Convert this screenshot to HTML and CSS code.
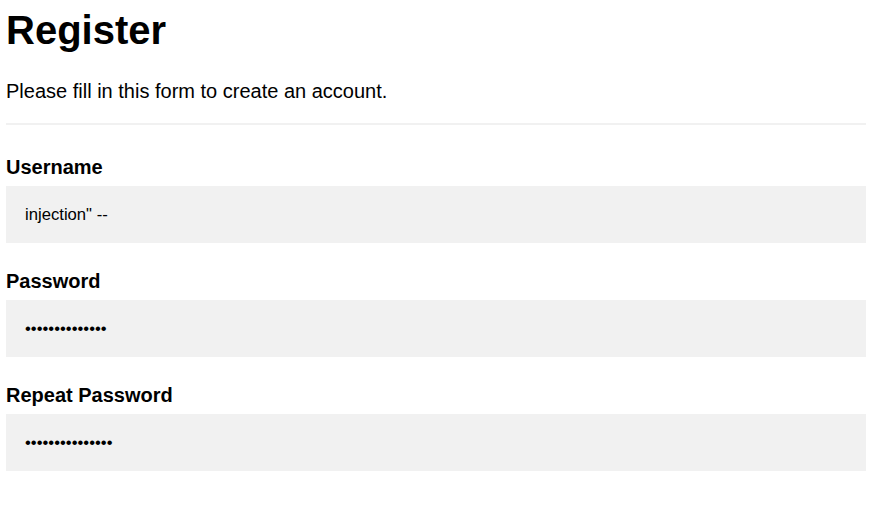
FILE: index.html
```html
<!DOCTYPE html>
<html lang="en">
<head>
<meta charset="utf-8">
<title>Register</title>
<link rel="stylesheet" href="styles.css">
</head>
<body>
<form class="container">
  <h1 class="title">Register</h1>
  <p class="intro">Please fill in this form to create an account.</p>
  <hr class="rule">
  <label class="field-label" for="username">Username</label>
  <input class="field" type="text" id="username" value="injection&quot; --">
  <label class="field-label" for="password">Password</label>
  <input class="field" type="password" id="password" value="abcdefghijklmn">
  <label class="field-label" for="repeat">Repeat Password</label>
  <input class="field" type="password" id="repeat" value="abcdefghijklmno">
</form>
</body>
</html>
```
FILE: styles.css
```css
html, body {
  margin: 0;
  background: #ffffff;
}

body {
  font-family: "Liberation Sans", Arial, sans-serif;
  color: #000;
}

.container {
  width: 860px;
  margin: 0 0 0 6px;
  padding-top: 7px;
}

.title {
  font-size: 40px;
  line-height: 46px;
  font-weight: bold;
  margin: 0 0 27px;
}

.intro {
  font-size: 20px;
  line-height: 23px;
  margin: 0 0 20px;
}

.rule {
  border: 0;
  border-top: 2px solid #f1f1f1;
  height: 0;
  margin: 0 0 31px;
}

.field-label {
  display: block;
  font-size: 20px;
  line-height: 23px;
  font-weight: bold;
}

.field {
  display: block;
  box-sizing: border-box;
  width: 100%;
  height: 57px;
  margin: 7px 0 27px;
  padding: 0 19px;
  border: none;
  outline: none;
  background: #f1f1f1;
  font-family: "Liberation Sans", Arial, sans-serif;
  font-size: 16.67px;
  color: #000;
}
```
